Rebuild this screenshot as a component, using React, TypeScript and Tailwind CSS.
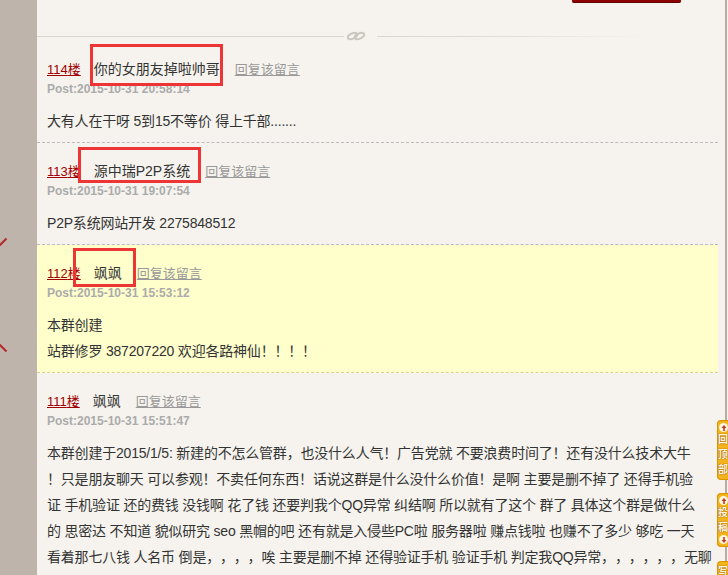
import React from "react";

interface CommentItem {
  floor: number;
  name: React.ReactNode;
  date: string;
  lines: string[];
  highlight?: boolean;
}

const comments: CommentItem[] = [
  {
    floor: 114,
    name: "你的女朋友掉啦帅哥",
    date: "2015-10-31 20:58:14",
    lines: ["大有人在干呀 5到15不等价 得上千部......."],
  },
  {
    floor: 113,
    name: "源中瑞P2P系统",
    date: "2015-10-31 19:07:54",
    lines: ["P2P系统网站开发 2275848512"],
  },
  {
    floor: 112,
    name: "飒飒",
    date: "2015-10-31 15:53:12",
    lines: ["本群创建", "站群修罗 387207220 欢迎各路神仙！！！！"],
    highlight: true,
  },
  {
    floor: 111,
    name: "飒飒",
    date: "2015-10-31 15:51:47",
    lines: [
      "本群创建于2015/1/5: 新建的不怎么管群，也没什么人气！广告党就 不要浪费时间了！还有没什么技术大牛",
      "！只是朋友聊天 可以参观！不卖任何东西！话说这群是什么没什么价值！是啊 主要是删不掉了 还得手机验",
      "证 手机验证 还的费钱 没钱啊 花了钱 还要判我个QQ异常 纠结啊 所以就有了这个 群了 具体这个群是做什么",
      "的 思密达 不知道 貌似研究 seo 黑帽的吧 还有就是入侵些PC啦 服务器啦 赚点钱啦 也赚不了多少 够吃 一天",
      "看着那七八钱 人名币 倒是，，，，唉 主要是删不掉 还得验证手机 验证手机 判定我QQ异常，，，，，，无聊",
    ],
  },
];

// little red arrow in a white dot, used on the side tabs
const ArrowDot = ({ down }: { down?: boolean }) => (
  <div className="w-[9px] h-[9px] rounded-full bg-[#fff6dc] flex items-center justify-center ml-[1px]">
    <svg width="6" height="6" viewBox="0 0 6 6">
      {down ? (
        <path d="M3 6 L0.5 3 H2.2 V0 H3.8 V3 H5.5 Z" fill="#c0392b" />
      ) : (
        <path d="M3 0 L5.5 3 H3.8 V6 H2.2 V3 H0.5 Z" fill="#c0392b" />
      )}
    </svg>
  </div>
);

const SideTab = ({ chars, up, down, top }: { chars: string[]; up?: boolean; down?: boolean; top: string }) => (
  <div
    className={`absolute left-[717px] ${top} w-[11px] rounded-tl-[4px] rounded-bl-[4px] bg-[#f3b31b] border border-r-0 border-[#d99400] py-[2px] flex flex-col items-start`}
  >
    {up && <ArrowDot />}
    {chars.map((c) => (
      <span
        key={c}
        className="block text-[10px] leading-[15px] font-bold text-[#fff8e0] [text-shadow:0_0_1px_#9a5200,0_0_1px_#9a5200]"
      >
        {c}
      </span>
    ))}
    {down && <ArrowDot down />}
  </div>
);

const Comment = ({ item }: { item: CommentItem }) => (
  <div
    className={`pl-[10px] pt-[18px] pb-[8px] border-b border-dashed ${
      item.highlight ? "bg-[#ffffcc] border-[#d9d19a]" : "border-[#bbbbbb]"
    }`}
  >
    <div className="h-[20px] leading-[20px] whitespace-nowrap">
      <a className="text-[13px] text-[#a00000] underline">{item.floor}楼</a>
      <span className="ml-[13px] text-[14px] text-[#333]">{item.name}</span>
      <a className="ml-[15px] text-[13px] text-[#999] underline">回复该留言</a>
    </div>
    <div className="leading-[20px] text-[12px] font-bold text-[#ababab]">Post:{item.date}</div>
    <div className="mt-[9px] w-[668px] [text-spacing-trim:space-all]">
      {item.lines.map((l, i) => (
        <div key={i} className="leading-[26px] text-[14px] text-[#333] whitespace-nowrap tracking-[-0.2px]">
          {l}
        </div>
      ))}
    </div>
  </div>
);

export default function App() {
  return (
    <div
      className="relative w-[728px] h-[575px] overflow-hidden flex bg-[#f6f3ee]"
      style={{ fontFamily: '"Liberation Sans", Arial, "Noto Sans CJK SC", sans-serif' }}
    >
      {/* left page margin */}
      <div className="relative w-[37px] shrink-0 bg-[#bfb4ac]">
        <div className="absolute left-[-2px] top-[241px] w-[10px] h-[2px] bg-[#b3262a] -rotate-45" />
        <div className="absolute left-[-2px] top-[347px] w-[10px] h-[2px] bg-[#b3262a] rotate-45" />
      </div>

      {/* main column */}
      <div className="w-[681px] shrink-0">
        <div className="h-[41px] flex flex-col">
          <div className="ml-[535px] w-[109px] h-[6px] bg-[#8e0000] border-b border-[#5e0000] rounded-b-[2px]" />
          <div className="mt-[28px] flex items-center">
            <div className="w-[307px] h-px bg-[#d9d5cf]" />
            <svg className="mx-[2px]" width="20" height="10" viewBox="0 0 20 10">
              <ellipse cx="6.5" cy="5" rx="5" ry="2.6" transform="rotate(-25 6.5 5)" fill="none" stroke="#c9c5bf" strokeWidth="2" />
              <ellipse cx="13.5" cy="5" rx="5" ry="2.6" transform="rotate(-25 13.5 5)" fill="none" stroke="#c9c5bf" strokeWidth="2" />
            </svg>
            <div className="ml-[9px] w-[270px] h-px bg-gradient-to-r from-[#d9d5cf] via-[#e2ded8] to-transparent" />
          </div>
        </div>
        {comments.map((c) => (
          <Comment key={c.floor} item={c} />
        ))}
      </div>

      {/* right rail */}
      <div className="w-[7px] shrink-0" />
      <div className="w-[2px] shrink-0 bg-[#b9ada1]" />

      {/* annotation boxes */}
      <div className="absolute left-[90px] top-[44px] w-[133px] h-[42px] border-[3px] border-[#ee3535]" />
      <div className="absolute left-[78px] top-[147px] w-[123px] h-[36px] border-[3px] border-[#ee3535]" />
      <div className="absolute left-[73px] top-[248px] w-[63px] h-[39px] border-[3px] border-[#ee3535]" />

      {/* floating side tabs */}
      <SideTab top="top-[420px]" chars={["回", "顶", "部"]} up />
      <SideTab top="top-[493px]" chars={["投", "稿"]} up down />
      <SideTab top="top-[561px]" chars={["写"]} />
    </div>
  );
}
